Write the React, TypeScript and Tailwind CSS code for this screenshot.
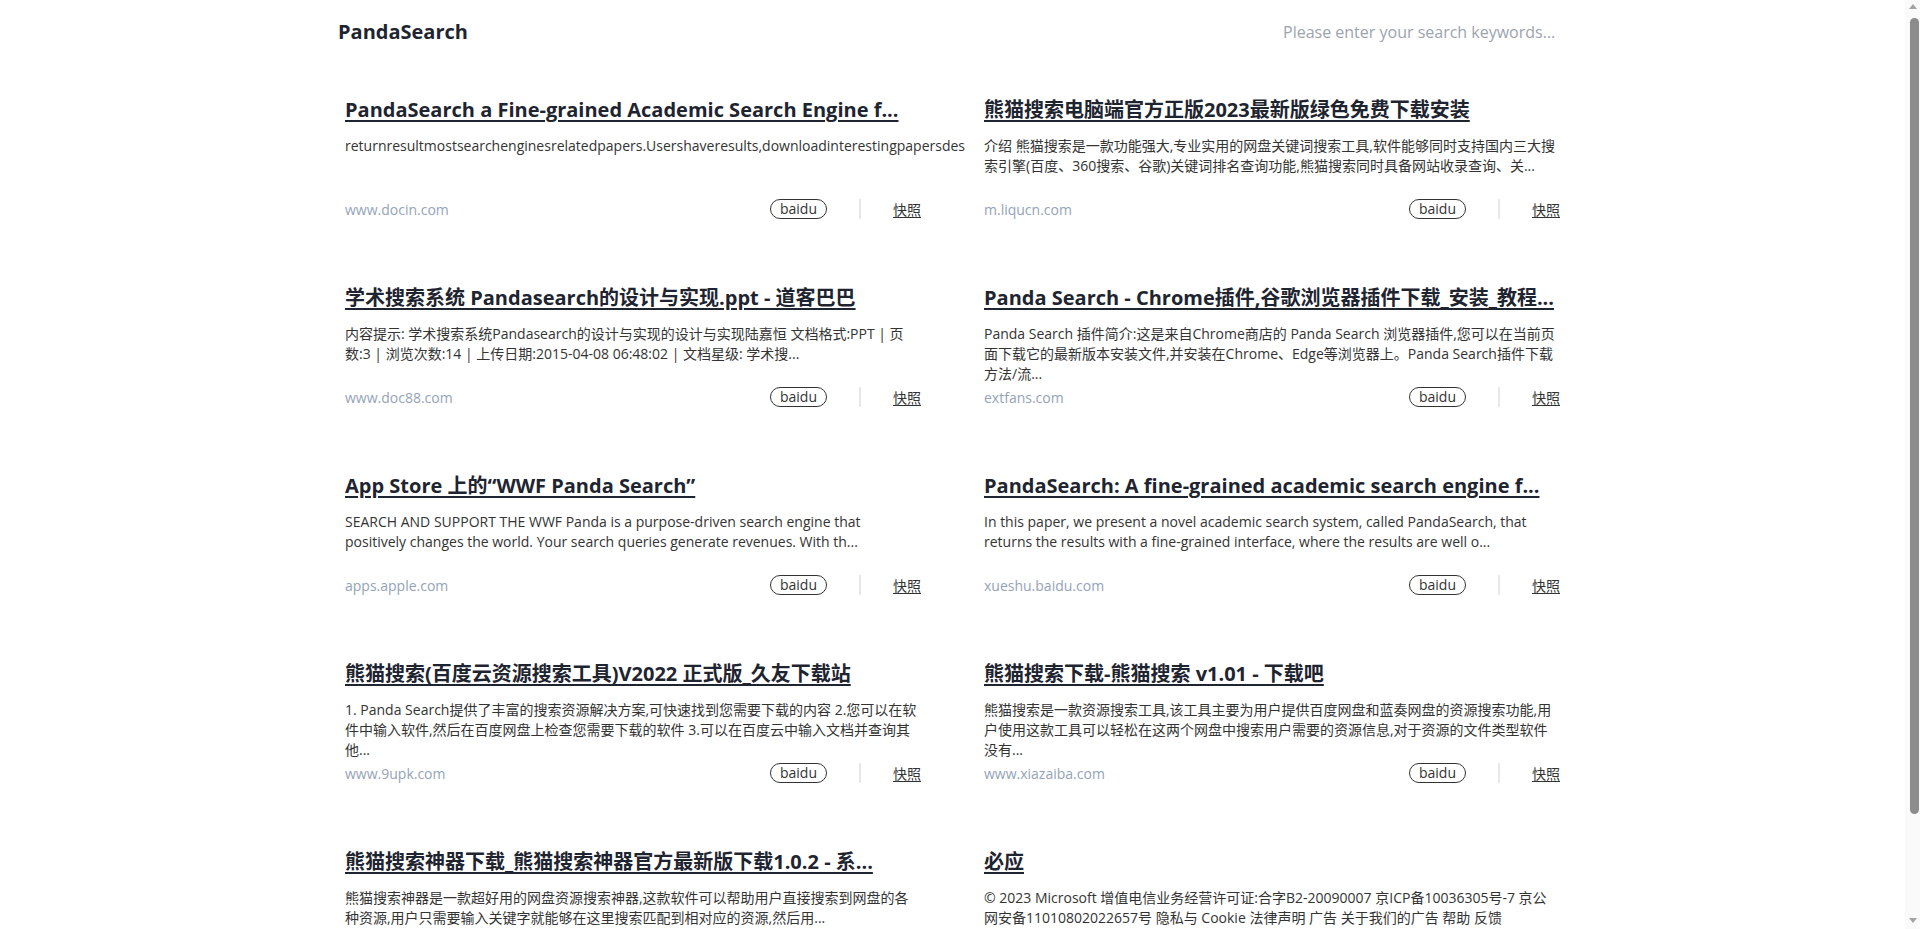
import { useState } from "react";

type Result = {
  title: string;
  desc: string;
  url: string;
  source: string;
};

const results: Result[] = [
  {
    title: "PandaSearch a Fine-grained Academic Search Engine f...",
    desc: "returnresultmostsearchenginesrelatedpapers.Usershaveresults,downloadinterestingpapersdes",
    url: "www.docin.com",
    source: "baidu",
  },
  {
    title: "熊猫搜索电脑端官方正版2023最新版绿色免费下载安装",
    desc: "介绍 熊猫搜索是一款功能强大,专业实用的网盘关键词搜索工具,软件能够同时支持国内三大搜索引擎(百度、360搜索、谷歌)关键词排名查询功能,熊猫搜索同时具备网站收录查询、关...",
    url: "m.liqucn.com",
    source: "baidu",
  },
  {
    title: "学术搜索系统 Pandasearch的设计与实现.ppt - 道客巴巴",
    desc: "内容提示: 学术搜索系统Pandasearch的设计与实现的设计与实现陆嘉恒 文档格式:PPT | 页数:3 | 浏览次数:14 | 上传日期:2015-04-08 06:48:02 | 文档星级: 学术搜...",
    url: "www.doc88.com",
    source: "baidu",
  },
  {
    title: "Panda Search - Chrome插件,谷歌浏览器插件下载_安装_教程...",
    desc: "Panda Search 插件简介:这是来自Chrome商店的 Panda Search 浏览器插件,您可以在当前页面下载它的最新版本安装文件,并安装在Chrome、Edge等浏览器上。Panda Search插件下载方法/流...",
    url: "extfans.com",
    source: "baidu",
  },
  {
    title: "App Store 上的“WWF Panda Search”",
    desc: "SEARCH AND SUPPORT THE WWF Panda is a purpose-driven search engine that positively changes the world. Your search queries generate revenues. With th...",
    url: "apps.apple.com",
    source: "baidu",
  },
  {
    title: "PandaSearch: A fine-grained academic search engine f...",
    desc: "In this paper, we present a novel academic search system, called PandaSearch, that returns the results with a fine-grained interface, where the results are well o...",
    url: "xueshu.baidu.com",
    source: "baidu",
  },
  {
    title: "熊猫搜索(百度云资源搜索工具)V2022 正式版_久友下载站",
    desc: "1. Panda Search提供了丰富的搜索资源解决方案,可快速找到您需要下载的内容 2.您可以在软件中输入软件,然后在百度网盘上检查您需要下载的软件 3.可以在百度云中输入文档并查询其他...",
    url: "www.9upk.com",
    source: "baidu",
  },
  {
    title: "熊猫搜索下载-熊猫搜索 v1.01 - 下载吧",
    desc: "熊猫搜索是一款资源搜索工具,该工具主要为用户提供百度网盘和蓝奏网盘的资源搜索功能,用户使用这款工具可以轻松在这两个网盘中搜索用户需要的资源信息,对于资源的文件类型软件没有...",
    url: "www.xiazaiba.com",
    source: "baidu",
  },
  {
    title: "熊猫搜索神器下载_熊猫搜索神器官方最新版下载1.0.2 - 系...",
    desc: "熊猫搜索神器是一款超好用的网盘资源搜索神器,这款软件可以帮助用户直接搜索到网盘的各种资源,用户只需要输入关键字就能够在这里搜索匹配到相对应的资源,然后用...",
    url: "www.xitongzhijia.net",
    source: "baidu",
  },
  {
    title: "必应",
    desc: "© 2023 Microsoft 增值电信业务经营许可证:合字B2-20090007 京ICP备10036305号-7 京公网安备11010802022657号 隐私与 Cookie 法律声明 广告 关于我们的广告 帮助 反馈",
    url: "cn.bing.com",
    source: "baidu",
  },
];

function ResultCard({ title, desc, url, source }: Result) {
  return (
    <div className="bg-white p-[15px] flex flex-col">
      <a
        href="#"
        className="block truncate text-[20px] leading-7 pt-px font-bold text-[#1e2430] underline decoration-2 underline-offset-[3px]"
      >
        {title}
      </a>
      <p className="mt-[12px] h-[60px] text-[14px] leading-5 text-[#333]">{desc}</p>
      <div className="mt-[3px] h-5 flex items-center justify-between text-[14px]">
        <span className="text-[#94a3b8]">{url}</span>
        <div className="flex items-center gap-8">
          <span className="rounded-full border border-[#333] px-[9px] leading-[18px] text-[#333]">
            {source}
          </span>
          <span className="w-[2px] h-5 bg-[#e5e7eb]" />
          <a href="#" className="text-[#333] underline underline-offset-2">
            快照
          </a>
        </div>
      </div>
    </div>
  );
}

function Scrollbar() {
  return (
    <div className="sticky top-0 h-screen w-[15px] shrink-0 bg-[#fafafa] flex flex-col items-center">
      <svg width="8" height="5" viewBox="0 0 8 5" className="mt-[4px]">
        <path d="M0 5 L4 0 L8 5 Z" fill="#a3a3a3" />
      </svg>
      <div className="mt-[9px] ml-[3px] w-[9px] h-[796px] rounded-full bg-[#8c8c8c]" />
      <div className="flex-1" />
      <svg width="8" height="5" viewBox="0 0 8 5" className="mb-[6px]">
        <path d="M0 0 L8 0 L4 5 Z" fill="#a3a3a3" />
      </svg>
    </div>
  );
}

export default function App() {
  const [query, setQuery] = useState("");

  return (
    <div className="min-h-screen bg-white flex font-['Open_Sans','Noto_Sans_CJK_SC',sans-serif]">
      <main className="flex-1 min-w-0">
        <div className="max-w-[1245px] mx-auto pb-[100px]">
          <header className="h-16 px-2 flex items-center justify-between">
            <h1 className="text-[20px] font-bold text-[#1e2430]">PandaSearch</h1>
            <input
              value={query}
              onChange={(e) => setQuery(e.target.value)}
              placeholder="Please enter your search keywords..."
              className="w-[296px] px-3 text-[16px] text-[#374151] placeholder:text-[#9ca3af] outline-none bg-transparent"
            />
          </header>

          <div className="mt-4 grid grid-cols-2 gap-x-[33px] gap-y-[34px]">
            {results.map((r) => (
              <ResultCard key={r.url} {...r} />
            ))}
          </div>
        </div>
      </main>
      <Scrollbar />
    </div>
  );
}
